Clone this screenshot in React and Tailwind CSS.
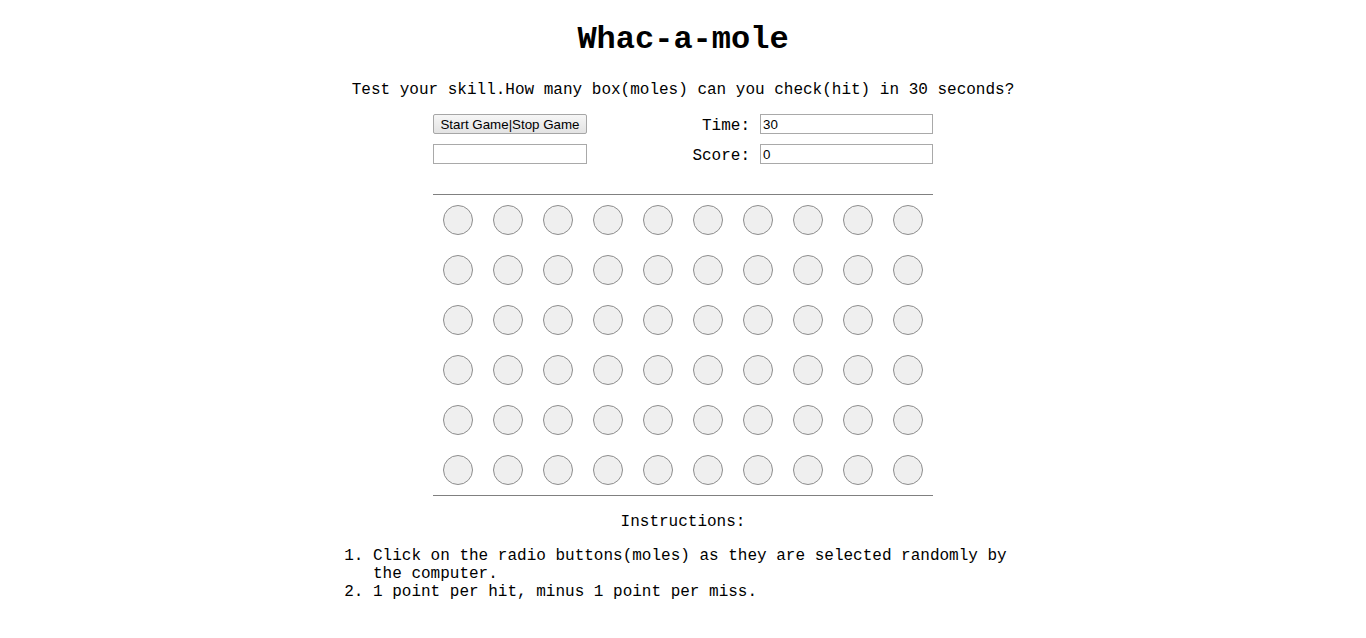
import React from "react";

export default function App() {
  const rows = Array.from({ length: 6 });
  const cols = Array.from({ length: 10 });
  return (
    <div className="w-[1366px] min-h-[638px] bg-white text-black font-['Liberation_Mono',monospace]">
      <h1 className="text-center text-[32px] leading-[36px] font-bold pt-[22px]">Whac-a-mole</h1>
      <p className="text-center text-[16px] leading-[18px] mt-[23px]">
        Test your skill.How many box(moles) can you check(hit) in 30 seconds?
      </p>
      <div className="w-[500px] mx-auto mt-[15px] flex flex-col gap-[10px]">
        <div className="flex items-center h-[20px]">
          <button className="w-[154px] h-[20px] pt-[1px] border border-[#a6a6a6] bg-gradient-to-b from-[#f6f6f6] to-[#e3e3e3] rounded-[2px] text-[13.33px] leading-[16px] font-['Liberation_Sans',Arial,sans-serif] text-black">
            Start Game|Stop Game
          </button>
          <div className="flex-1 text-right text-[16px] leading-[18px] pt-[4px] pr-[10px]">Time:</div>
          <input
            readOnly
            value="30"
            className="w-[173px] h-[20px] border border-[#a9a9a9] px-[2px] text-[13.33px] font-['Liberation_Sans',Arial,sans-serif] outline-none"
          />
        </div>
        <div className="flex items-center h-[20px]">
          <input
            readOnly
            value=""
            className="w-[154px] h-[20px] border border-[#a9a9a9] px-[2px] text-[13.33px] font-['Liberation_Sans',Arial,sans-serif] outline-none"
          />
          <div className="flex-1 text-right text-[16px] leading-[18px] pt-[4px] pr-[10px]">Score:</div>
          <input
            readOnly
            value="0"
            className="w-[173px] h-[20px] border border-[#a9a9a9] px-[2px] text-[13.33px] font-['Liberation_Sans',Arial,sans-serif] outline-none"
          />
        </div>
      </div>
      <div className="w-[500px] mx-auto mt-[30px] border-t border-b border-[#808080]">
        {rows.map((_, r) => (
          <div key={r} className="flex h-[50px]">
            {cols.map((_, c) => (
              <div key={c} className="w-[50px] h-[50px] flex items-center justify-center">
                <div className="w-[30px] h-[30px] rounded-full border border-[#8d8d8d] bg-[#efefef]" />
              </div>
            ))}
          </div>
        ))}
      </div>
      <p className="text-center text-[16px] leading-[18px] mt-[17px]">Instructions:</p>
      <ol className="w-[700px] mx-auto mt-[16px] pl-[40px] list-decimal text-[16px] leading-[18px]">
        <li>Click on the radio buttons(moles) as they are selected randomly by the computer.</li>
        <li>1 point per hit, minus 1 point per miss.</li>
      </ol>
    </div>
  );
}
